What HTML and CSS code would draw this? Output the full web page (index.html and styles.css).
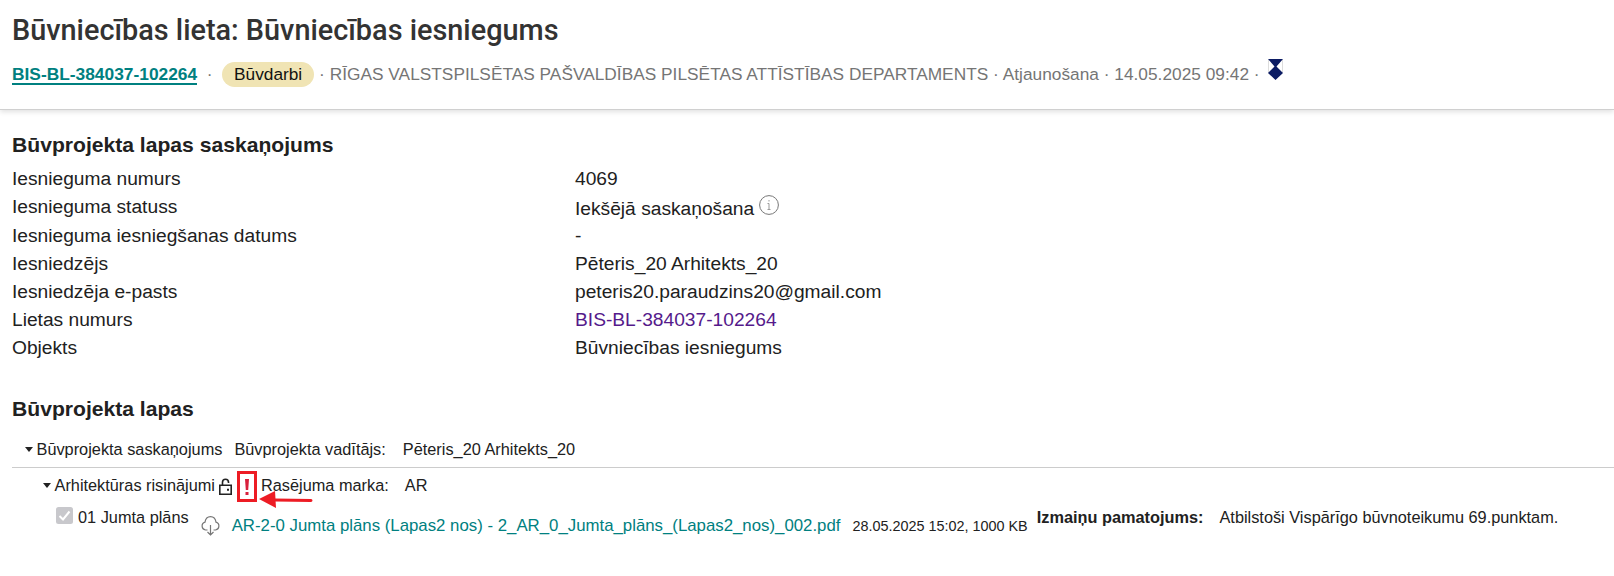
FILE: index.html
```
<!DOCTYPE html>
<html lang="lv">
<head>
	<meta charset="UTF-8">
	<title>Būvniecības lieta</title>
	<link rel="stylesheet" href="styles.css">
</head>
<body>
	<div class="header">
		<h1>Būvniecības lieta: Būvniecības iesniegums</h1>
		<div class="sub">
			<a href="#" class="case">BIS-BL-384037-102264</a>
			<span class="dot">·</span>
			<span class="badge">Būvdarbi</span>
			<span class="meta">· RĪGAS VALSTSPILSĒTAS PAŠVALDĪBAS PILSĒTAS ATTĪSTĪBAS DEPARTAMENTS · Atjaunošana · 14.05.2025 09:42 ·</span>
			<svg class="mark" width="15" height="21" viewBox="0 0 15 21">
				<path d="M.5 1v13M14.500 1v13" stroke="#ddd"/>
				<path d="M0 0h15L8.500 7.500 15 14 7.500 21 0 14 6.500 7.500z" fill="#0c1c64"/>
			</svg>
		</div>
	</div>

	<div class="content">
		<h2>Būvprojekta lapas saskaņojums</h2>
		<dl class="details">
			<dt>Iesnieguma numurs</dt><dd>4069</dd>
			<dt>Iesnieguma statuss</dt>
			<dd class="status">Iekšējā saskaņošana
				<svg class="info" width="20" height="20" viewBox="0 0 20 20" fill="none" stroke="#777">
					<circle cx="10" cy="10" r="9.4"/>
					<path d="M10 8.500v5.500M8.500 8.500h1.500M8.500 14.500h3M10 5v1.500" stroke="#999"/>
				</svg>
			</dd>
			<dt>Iesnieguma iesniegšanas datums</dt><dd>-</dd>
			<dt>Iesniedzējs</dt><dd>Pēteris_20 Arhitekts_20</dd>
			<dt>Iesniedzēja e-pasts</dt><dd>peteris20.paraudzins20@gmail.com</dd>
			<dt>Lietas numurs</dt><dd><a href="#" class="visited">BIS-BL-384037-102264</a></dd>
			<dt>Objekts</dt><dd>Būvniecības iesniegums</dd>
		</dl>

		<h2 class="second">Būvprojekta lapas</h2>
		<div class="row group">
			<i class="arrow"></i>
			<span>Būvprojekta saskaņojums</span>
			<span class="lbl">Būvprojekta vadītājs:</span>
			<span class="val">Pēteris_20 Arhitekts_20</span>
		</div>
		<div class="row part">
			<i class="arrow"></i>
			<span>Arhitektūras risinājumi</span>
			<svg class="lock" width="13" height="17" viewBox="0 0 13 17" fill="none" stroke="#222" stroke-width="1.600">
				<path d="M.8 7.300h11.400v8.900H.8zM3.500 7V4.200a3 3 0 0 1 6 0V5"/>
				<path d="M8 11.800h2" stroke-width="2"/>
			</svg>
			<span class="warn">
				<svg width="4" height="16" viewBox="0 0 4 16" fill="#d8203c"><path d="M0 0h4L3.200 11H.8zM.5 13h3v3h-3z"/></svg>
				<svg class="pointer" width="55" height="18" viewBox="0 0 55 18"><path d="M16 9l36 .5" stroke="#ed1c24" stroke-width="3" stroke-linecap="round"/><path d="M0 8L16 0l1 17z" fill="#ed1c24"/></svg>
			</span>
			<span class="lbl">Rasējuma marka:</span>
			<span class="val">AR</span>
		</div>
		<div class="row sheet">
			<svg class="check" width="17" height="17" viewBox="0 0 17 17"><rect width="17" height="17" rx="2.500" fill="#c8c8cc"/><path d="M3.500 9l3.500 3.500 6.500-8" fill="none" stroke="#fff" stroke-width="2"/></svg>
			<span class="name">01 Jumta plāns</span>
			<svg class="cloud" width="19" height="20" viewBox="0 0 19 20" fill="none" stroke="#777" stroke-width="1.200">
				<path d="M6.500 14H4.500A4 4 0 0 1 4 6.200C4.500 2.800 6.500.7 9.500.7c3 0 5 2.100 5.500 5.500a4 4 0 0 1-.5 7.800h-2M9.500 9v10M6.500 16l3 3 3-3"/>
			</svg>
			<a href="#" class="file">AR-2-0 Jumta plāns (Lapas2 nos) - 2_AR_0_Jumta_plāns_(Lapas2_nos)_002.pdf</a>
			<span class="date">28.05.2025 15:02, 1000 KB</span>
			<b class="reason">Izmaiņu pamatojums:</b>
			<span class="text">Atbilstoši Vispārīgo būvnoteikumu 69.punktam.</span>
		</div>
	</div>
</body>
</html>
```
FILE: styles.css
```
body,h1,h2,dl,dd{ margin: 0;padding: 0; }
body{ background: #fff;color: #212121;font-family: "Liberation Sans", Arial, sans-serif;font-size: 19.2px; }
a{ color: #008080;text-decoration: none; }
svg{ display: block;flex: none; }

.header{ box-sizing: border-box;height: 110px;padding: 12px 12px 0;border-bottom: 1px solid #d0d0d0;box-shadow: 0 2px 5px rgba(0,0,0,.12); }
.header h1{ font-family: Roboto, sans-serif;font-size: 28.85px;font-weight: 500;line-height: 36px;color: #333; }
.sub{ display: flex;align-items: center;margin-top: 14px;height: 25px;font-size: 17.28px;color: #757575;white-space: nowrap; }
.case{ font-weight: bold;font-size: 17.35px;border-bottom: 2px solid #008080;line-height: 18px;margin-top: 1px; }
.dot{ width: 25px;text-align: center; }
.badge{ box-sizing: border-box;width: 92px;height: 25px;line-height: 25px;border-radius: 13px;background: #f0e4b4;color: #111;text-align: center; }
.meta{ margin-left: 5px;letter-spacing: .02px; }
.mark{ margin: -10px 0 0 8px; }

.content{ padding: 20px 0 0 12px; }
h2{ font-size: 21.12px;line-height: 30px; }
.details{ display: grid;grid-template-columns: 563px 1fr;grid-template-rows: 28px 29px 28px 28px 28px 28px 28px;margin-top: 5px;line-height: 28px; }
.status{ display: flex;line-height: 32px; }
.info{ margin: 2px 0 0 5px; }
.visited{ color: #551a8b; }
.second{ margin-top: 32px; }

.row{ display: flex;font-size: 16.32px;line-height: 20px;white-space: nowrap; }
.arrow{ width: 0;height: 0;border: 4px solid transparent;border-top: 5px solid #222;border-bottom: 0;margin: 8px 3.500px 0 0; }
.group{ height: 28px;padding: 15px 0 0 13px;border-bottom: 1px solid #ccc; }
.part{ height: 35px;padding: 7px 0 0 31px;box-sizing: border-box; }
.sheet{ padding-left: 44px; }
.lbl{ margin-left: 12px; }
.val{ margin-left: 17px; }
.lock{ margin: 3px 0 0 4.500px; }
.warn{ position: relative;box-sizing: border-box;width: 20px;height: 31px;margin: -4px 0 0 5px;border: 3px solid #ed1c24;padding: 5px 0 0 5px; }
.pointer{ position: absolute;left: 19px;top: 17px; }
.part .lbl{ margin-left: 3.500px; }
.part .val{ margin-left: 16px; }
.check{ margin-top: 4px; }
.name{ margin: 4px 0 0 5px; }
.cloud{ margin: 13px 0 0 12px; }
.file{ margin: 13px 0 0 12px;font-size: 16.81px; }
.date{ margin: 13px 0 0 12px;font-size: 14.4px; }
.reason{ margin: 4px 0 0 9px; }
.text{ margin: 4px 0 0 16px; }
```
